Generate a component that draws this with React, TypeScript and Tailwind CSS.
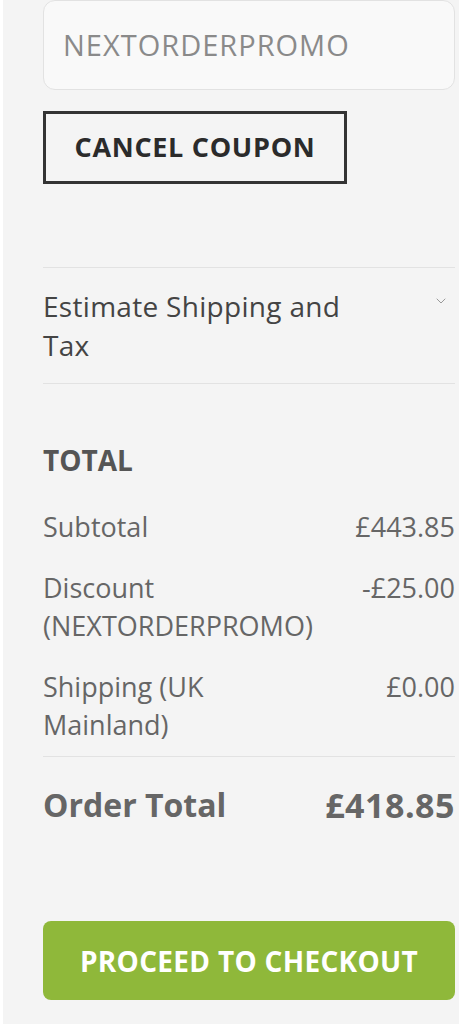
import { ChevronDown } from 'lucide-react';

const rows = [
  { label: 'Subtotal', value: '£443.85' },
  { label: 'Discount (NEXTORDERPROMO)', value: '-£25.00' },
  { label: 'Shipping (UK Mainland)', value: '£0.00' },
];

export default function App() {
  return (
    <div className="min-h-[1024px] w-[466px] bg-white pl-[3px] pr-[7px]" style={{ fontFamily: '"Open Sans", "Noto Sans", sans-serif' }}>
      <div className="min-h-[1024px] bg-[#f4f4f4] pl-[40px] pr-[4px]">
        <div className="flex h-[90px] items-center rounded-[12px] border border-[#e2e2e2] bg-[#f9f9f9] px-[19px] text-[29px] tracking-[1px] text-[#8a8a8a]">
          NEXTORDERPROMO
        </div>
        <button className="mt-[21px] flex h-[73px] w-[304px] items-center justify-center border-[3px] border-[#333] text-[27px] font-bold tracking-[0.7px] text-[#2b2b2b]">
          CANCEL COUPON
        </button>

        <div className="mt-[83px] border-y border-[#e2e2e2]">
          <div className="flex items-start justify-between pt-[19px] pb-[18px]">
            <span className="w-[340px] text-[28px] leading-[39px] tracking-[0.3px] text-[#444]">Estimate Shipping and Tax</span>
            <ChevronDown className="mt-[6px] mr-[6px] h-[16px] w-[16px] text-[#999]" strokeWidth={1.5} />
          </div>
        </div>

        <div className="pt-[61px] text-[28px] font-bold leading-[30px] text-[#555]">TOTAL</div>

        <div className="mt-[33px] border-b border-[#e2e2e2] pb-[12px]">
          {rows.map((r) => (
            <div key={r.label} className="mb-[23px] flex items-start justify-between text-[27px] leading-[38px] text-[#666] last:mb-0">
              <span className="w-[290px]">{r.label}</span>
              <span>{r.value}</span>
            </div>
          ))}
        </div>

        <div className="mt-[28px] flex items-center justify-between text-[32px] font-bold leading-[40px] text-[#666]">
          <span>Order Total</span>
          <span className="text-[34px] tracking-[0.5px]">£418.85</span>
        </div>

        <button className="mt-[96px] flex h-[79px] w-full items-center justify-center rounded-[8px] bg-[#8fb83a] text-[28px] font-bold tracking-[0.3px] text-white">
          PROCEED TO CHECKOUT
        </button>
      </div>
    </div>
  );
}
